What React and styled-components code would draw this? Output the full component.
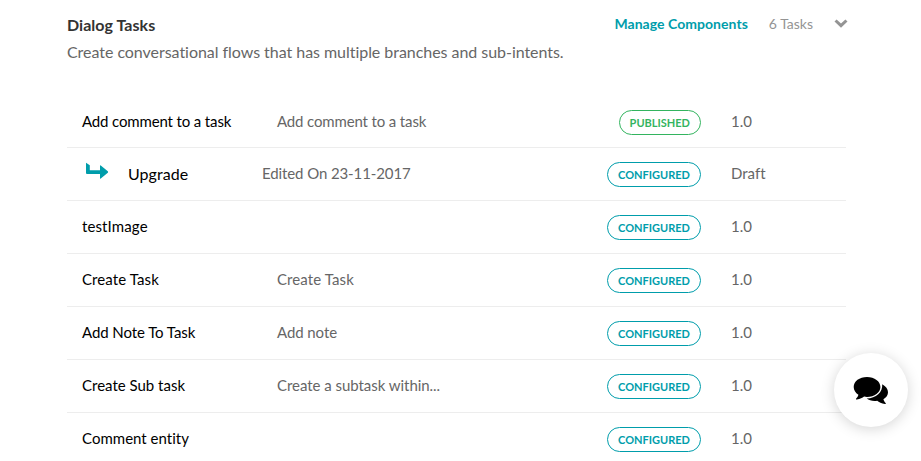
import React from 'react';
import styled, { createGlobalStyle } from 'styled-components';

const GlobalStyle = createGlobalStyle`
  * { box-sizing: border-box; }
  body { margin: 0; background: #fff; font-family: Lato, sans-serif; overflow: hidden; }
`;
const Page = styled.main`width: 921px; height: 461px; overflow: hidden; padding: 0 75px 0 67px;`;
const Header = styled.header`display: flex; justify-content: space-between; height: 95px; padding-top: 13px;`;
const Title = styled.h1`margin: 0; font-size: 16px; line-height: 24px; font-weight: 700; color: #333; letter-spacing: 0.04px;`;
const Description = styled.p`margin: 3px 0 0; font-size: 16px; line-height: 24px; color: #666; letter-spacing: -0.042px; font-variant-ligatures: none;`;
const Actions = styled.div`display: flex; height: 20px; align-items: center; margin-top: 1px; font-size: 14px; line-height: 20px;`;
const Manage = styled.a`font-weight: 700; color: #009dab; letter-spacing: 0.04px;`;
const Count = styled.span`margin: 0 0 0 21px; color: #949494;`;
const Chevron = styled.svg`width: 14px; height: 9px; margin: -2px -2px 0 21px;`;
const List = styled.div`width: 779px;`;
const Row = styled.div`
  display: grid; grid-template-columns: ${p => (p.$branch ? '180px' : '195px')} 1fr 94px 145px;
  align-items: center; height: 53px; padding-left: 15px; padding-top: ${p => (p.$first ? '2px' : '0')};
  border-bottom: 1px solid #ededed; font-size: 15px; color: #666;
`;
const Text = styled.span`padding-bottom: 2px; white-space: nowrap; letter-spacing: ${p => p.$track || 0}px; font-variant-ligatures: none;`;
const Name = styled.div`display: flex; align-items: center; color: #000; font-size: ${p => (p.$branch ? '16px' : '15px')};`;
const BranchArrow = styled.svg`width: 24px; height: 18px; margin: 0 19px 6px 3px;`;
const Badge = styled.span`
  justify-self: end; height: 25px; line-height: 24px; padding: 0 10px; border: 1px solid ${p => p.$color}; border-radius: 13px;
  color: ${p => p.$color}; font-size: 11px; font-weight: 700;
`;
const Version = styled(Text)`padding-left: 30px;`;
const Chat = styled.button`
  position: fixed; left: 834px; top: 353px; width: 74px; height: 74px; border: 0; border-radius: 50%; background: #fff;
  box-shadow: 0 2px 14px rgba(0,0,0,.17); display: flex; align-items: center; justify-content: center; padding: 2px 0 0;
`;
const Bubbles = styled.svg`width: 36px; height: 30px;`;

const tasks = [
  { name: 'Add comment to a task', detail: 'Add comment to a task', status: 'PUBLISHED', version: '1.0', track: -0.14, detailTrack: -0.14 },
  { name: 'Upgrade', detail: 'Edited On 23-11-2017', status: 'CONFIGURED', version: 'Draft', branch: true, track: 0.06, detailTrack: -0.1 },
  { name: 'testImage', status: 'CONFIGURED', version: '1.0', track: 0.12 },
  { name: 'Create Task', detail: 'Create Task', status: 'CONFIGURED', version: '1.0', track: 0.1, detailTrack: 0.1 },
  { name: 'Add Note To Task', detail: 'Add note', status: 'CONFIGURED', version: '1.0', track: -0.08, detailTrack: -0.08 },
  { name: 'Create Sub task', detail: 'Create a subtask within...', status: 'CONFIGURED', version: '1.0', detailTrack: -0.04 },
  { name: 'Comment entity', status: 'CONFIGURED', version: '1.0', track: 0.02 },
];

export default function App() {
  return (
    <>
      <GlobalStyle />
      <Page>
        <Header>
          <div>
            <Title>Dialog Tasks</Title>
            <Description>Create conversational flows that has multiple branches and sub-intents.</Description>
          </div>
          <Actions>
            <Manage>Manage Components</Manage>
            <Count>6 Tasks</Count>
            <Chevron viewBox="0 0 14 9"><path d="M0.5 2.5 2.6 0.5 7 4.5 11.4 0.5 13.5 2.5 7 8.8Z" fill="#949494" /></Chevron>
          </Actions>
        </Header>
        <List>
          {tasks.map((t, i) => (
            <Row key={t.name} $branch={t.branch} $first={i === 0}>
              <Name $branch={t.branch}>
                {t.branch && (
                  <BranchArrow viewBox="0 0 24 18">
                    <path d="M1 .8 4.8 3.2V8.2H15V3.8Q15 3 15.8 3.6L22.8 9.2Q23.5 10 22.8 10.7L15.8 16.4Q15 17 15 16.2V12H2Q1 12 1 11Z" fill="#009dab" />
                  </BranchArrow>
                )}
                <Text $track={t.track}>{t.name}</Text>
              </Name>
              <Text $track={t.detailTrack}>{t.detail}</Text>
              <Badge $color={t.status === 'PUBLISHED' ? '#33b45f' : '#009dab'}>{t.status}</Badge>
              <Version>{t.version}</Version>
            </Row>
          ))}
        </List>
      </Page>
      <Chat aria-label="Open chat">
        <Bubbles viewBox="0 0 36 30">
          <path d="M14 1C6.5 1 .7 5.3.7 11c0 3.1 1.8 5.9 4.7 7.8-.4 1.7-1.4 2.8-2.2 3.8-.5.6-.1 1.1.7 1 3.2-.6 5.5-1.8 7.2-3 1 .2 1.9.3 2.9.3 7.5 0 13.4-4.3 13.4-9.9S21.5 1 14 1Z" />
          <path d="M29.2 8.2c.8 7.8-6.2 14-15.5 14.4 2.5 1.9 6.2 2.8 10.5 2.2 1.7 1.4 4.3 2.6 7.8 3.2.7.1 1.1-.5.6-1-1-1-1.8-2.1-2.2-3.7 3-1.7 4.6-4.2 4.6-7 0-3.2-2.1-6.1-5.8-8.1Z" />
        </Bubbles>
      </Chat>
    </>
  );
}
